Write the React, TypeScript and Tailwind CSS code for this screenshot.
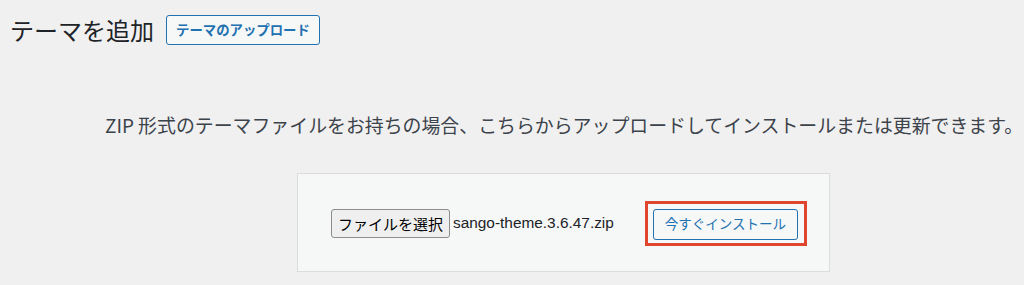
export default function App() {
  return (
    <div className="min-h-[285px] w-[1024px] bg-[#f0f0f1] font-['Noto_Sans_CJK_JP',sans-serif]">
      <div className="flex items-center gap-3 pl-[10px] pt-[15px]">
        <h1 className="text-[24px] leading-[30px] font-normal text-[#1d2327]">テーマを追加</h1>
        <button className="h-[30px] px-[9px] rounded-[3px] border border-[#2271b1] bg-[#f6f7f7] text-[13.4px] font-bold text-[#2271b1] leading-none">
          テーマのアップロード
        </button>
      </div>

      <p className="mt-[68px] ml-[105px] w-max whitespace-nowrap text-[18.9px] leading-[24px] text-[#3c434a]">
        ZIP 形式のテーマファイルをお持ちの場合、こちらからアップロードしてインストールまたは更新できます。
      </p>

      <div className="mt-[36px] ml-[297px] w-[533px] h-[99px] border border-[#dcdcde] bg-[#f6f7f7] flex items-center pl-[33px] pt-[1px]">
        <button className="h-[29px] w-[119px] rounded-[3px] border border-[#8c8c8c] bg-[#efefef] text-[15px] font-normal text-black leading-none">
          ファイルを選択
        </button>
        <span className="ml-[3px] font-['Liberation_Sans',sans-serif] text-[15.4px] text-[#1d2327]">sango-theme.3.6.47.zip</span>
        <div className="ml-[31px] border-[3px] border-[#e0452e] pl-[5px] pr-[6px] pt-[5px] pb-[3px]">
          <button className="h-[31px] w-[145px] rounded-[3px] border border-[#2271b1] bg-[#f6f7f7] text-[13.5px] text-[#2271b1] leading-none">
            今すぐインストール
          </button>
        </div>
      </div>
    </div>
  )
}
